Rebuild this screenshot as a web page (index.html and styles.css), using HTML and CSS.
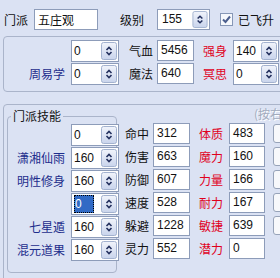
FILE: index.html
```html
<!DOCTYPE html>
<html>
<head>
<meta charset="utf-8">
<link rel="stylesheet" href="styles.css">
</head>
<body>
<svg class="defs" width="0" height="0">
  <defs>
    <linearGradient id="bg" x1="0" y1="0" x2="0" y2="1">
      <stop offset="0" stop-color="#f1f4fb"/>
      <stop offset="1" stop-color="#c9d4ec"/>
    </linearGradient>
    <symbol id="sb" viewBox="0 0 16 18">
      <rect x="0.5" y="0.5" width="15" height="17" rx="2" fill="url(#bg)" stroke="#a3b2cf"/>
      <polyline points="5.5,8 8,5.5 10.5,8" fill="none" stroke="#23305e" stroke-width="1.6"/>
      <polyline points="5.5,10 8,12.5 10.5,10" fill="none" stroke="#23305e" stroke-width="1.6"/>
    </symbol>
  </defs>
</svg>
<div class="page">
  <div class="toprow">
    <span class="lbl lbl-mp">门派</span>
    <div class="field name">五庄观</div>
    <span class="lbl lbl-jb">级别</span>
    <div class="spin lvl"><span class="val">155</span><svg class="btn"><use href="#sb"/></svg></div>
    <svg class="check" viewBox="0 0 13 13"><rect x="0.5" y="0.5" width="12" height="12" fill="#f6f8fc" stroke="#8797b6"/><polyline points="3,6.5 5.5,9 10,3.5" fill="none" stroke="#4c5f8e" stroke-width="2"/></svg>
    <span class="lbl lbl-fs">已飞升</span>
  </div>

  <div class="group g1">
    <div class="row1">
      <span class="blue"></span>
      <div class="spin"><span class="val">0</span><svg class="btn"><use href="#sb"/></svg></div>
      <span class="slbl">气血</span>
      <div class="field num">5456</div>
      <span class="red">强身</span>
      <div class="spin"><span class="val">140</span><svg class="btn"><use href="#sb"/></svg></div>
    </div>
    <div class="row1">
      <span class="blue">周易学</span>
      <div class="spin"><span class="val">0</span><svg class="btn"><use href="#sb"/></svg></div>
      <span class="slbl">魔法</span>
      <div class="field num">640</div>
      <span class="red">冥思</span>
      <div class="spin"><span class="val">0</span><svg class="btn"><use href="#sb"/></svg></div>
    </div>
  </div>

  <div class="group g2">
    <fieldset class="skills">
      <legend>门派技能</legend>
      <div class="srow"><span class="blue"></span><div class="spin"><span class="val">0</span><svg class="btn"><use href="#sb"/></svg></div></div>
      <div class="srow"><span class="blue">潇湘仙雨</span><div class="spin"><span class="val">160</span><svg class="btn"><use href="#sb"/></svg></div></div>
      <div class="srow"><span class="blue">明性修身</span><div class="spin"><span class="val">160</span><svg class="btn"><use href="#sb"/></svg></div></div>
      <div class="srow"><span class="blue"></span><div class="spin"><span class="val"><span class="sel">0</span></span><svg class="btn"><use href="#sb"/></svg></div></div>
      <div class="srow"><span class="blue">七星遁</span><div class="spin"><span class="val">160</span><svg class="btn"><use href="#sb"/></svg></div></div>
      <div class="srow"><span class="blue">混元道果</span><div class="spin"><span class="val">160</span><svg class="btn"><use href="#sb"/></svg></div></div>
    </fieldset>
    <div class="stats">
      <div class="hint">(按右键加点)</div>
      <div class="strow"><span class="slbl">命中</span><div class="field num">312</div><span class="red">体质</span><div class="field num">483</div><span></span><span class="pbtn"></span></div>
      <div class="strow"><span class="slbl">伤害</span><div class="field num">663</div><span class="red">魔力</span><div class="field num">160</div><span></span><span class="pbtn"></span></div>
      <div class="strow"><span class="slbl">防御</span><div class="field num">607</div><span class="red">力量</span><div class="field num">166</div><span></span><span class="pbtn"></span></div>
      <div class="strow"><span class="slbl">速度</span><div class="field num">528</div><span class="red">耐力</span><div class="field num">167</div><span></span><span class="pbtn"></span></div>
      <div class="strow"><span class="slbl">躲避</span><div class="field num">1228</div><span class="red">敏捷</span><div class="field num">639</div><span></span><span class="pbtn"></span></div>
      <div class="strow"><span class="slbl">灵力</span><div class="field num">552</div><span class="red">潜力</span><div class="field num">0</div><span></span><span></span></div>
    </div>
  </div>
</div>
</body>
</html>
```
FILE: styles.css
```css
html, body {
  margin: 0;
  padding: 0;
}
body {
  width: 280px;
  height: 278px;
  overflow: hidden;
  background: #dbe2f3;
  font-family: "Noto Sans CJK SC", "Liberation Sans", sans-serif;
  font-size: 12px;
  color: #111;
}
.defs {
  position: absolute;
  width: 0;
  height: 0;
}
.page {
  width: 300px;
}
.toprow {
  display: flex;
  align-items: center;
  height: 21px;
  padding-top: 9px;
}
.lbl {
  line-height: 21px;
  white-space: nowrap;
}
.lbl-mp {
  margin-left: 4px;
  width: 30px;
}
.lbl-jb {
  margin-left: 22px;
  width: 37px;
}
.lbl-fs {
  margin-left: 5px;
}
.check {
  width: 13px;
  height: 13px;
  margin-left: 10px;
}
.field {
  box-sizing: border-box;
  height: 21px;
  border: 1px solid #8d9cb9;
  background: #fff;
  padding-left: 3px;
  line-height: 19px;
  white-space: nowrap;
  overflow: hidden;
}
.name {
  width: 64px;
}
.num {
  font-family: "Liberation Sans", sans-serif;
}
.spin {
  box-sizing: border-box;
  display: flex;
  height: 22px;
  border: 1px solid #8d9cb9;
  background: #fff;
  padding: 1px;
  font-family: "Liberation Sans", sans-serif;
}
.spin .val {
  flex: 1;
  line-height: 18px;
  padding-left: 1px;
}
.spin .btn {
  width: 16px;
  height: 18px;
  flex: none;
}
.lvl {
  width: 53px;
  height: 21px;
}
.lvl .btn {
  height: 17px;
}
.lvl .val {
  line-height: 17px;
  padding-left: 3px;
}
.sel {
  display: block;
  box-sizing: border-box;
  width: 20px;
  height: 18px;
  background: #316ac5;
  color: #fff;
  outline: 1px dotted #000;
  outline-offset: -1px;
  padding-left: 1px;
}
.group {
  box-sizing: border-box;
  margin-left: 3px;
  width: 295px;
  border: 1px solid #aab4ca;
  border-radius: 4px;
}
.g1 {
  margin-top: 6px;
  height: 56px;
  padding-top: 3px;
}
.row1 {
  display: grid;
  grid-template-columns: 67px 48px 38px 37px 39px 46px;
  height: 23px;
  align-items: start;
}
.blue {
  color: #1d2d8c;
  text-align: right;
  padding-right: 6px;
  line-height: 22px;
  white-space: nowrap;
}
.slbl {
  padding-left: 10px;
  line-height: 22px;
  white-space: nowrap;
}
.red {
  color: #e0001c;
  padding-left: 9px;
  line-height: 22px;
  white-space: nowrap;
}
.g2 {
  margin-top: 12px;
  height: 190px;
  display: flex;
  align-items: flex-start;
}
.skills {
  margin: 4px 0 0 3px;
  padding: 1px 1px 10px 0;
  width: 112px;
  border: 1px solid #aab4ca;
  border-radius: 4px;
  min-width: 0;
}
.skills legend {
  margin-left: 3px;
  padding: 0 2px;
  line-height: 14px;
  color: #111;
}
.srow {
  display: grid;
  grid-template-columns: 63px 48px;
  height: 23px;
  align-items: start;
}
.stats {
  width: 180px;
}
.hint {
  height: 17px;
  line-height: 17px;
  padding-left: 137px;
  color: #a2abbd;
  text-shadow: 1px 1px 0 #fff;
  white-space: nowrap;
}
.strow {
  display: grid;
  grid-template-columns: 36px 37px 39px 36px 8px 20px;
  height: 23px;
  align-items: center;
}
.strow .slbl {
  padding-left: 8px;
}
.pbtn {
  box-sizing: border-box;
  height: 19px;
  border: 1px solid #97a3b9;
  border-radius: 3px;
  background: #f7f8fb;
}
```
